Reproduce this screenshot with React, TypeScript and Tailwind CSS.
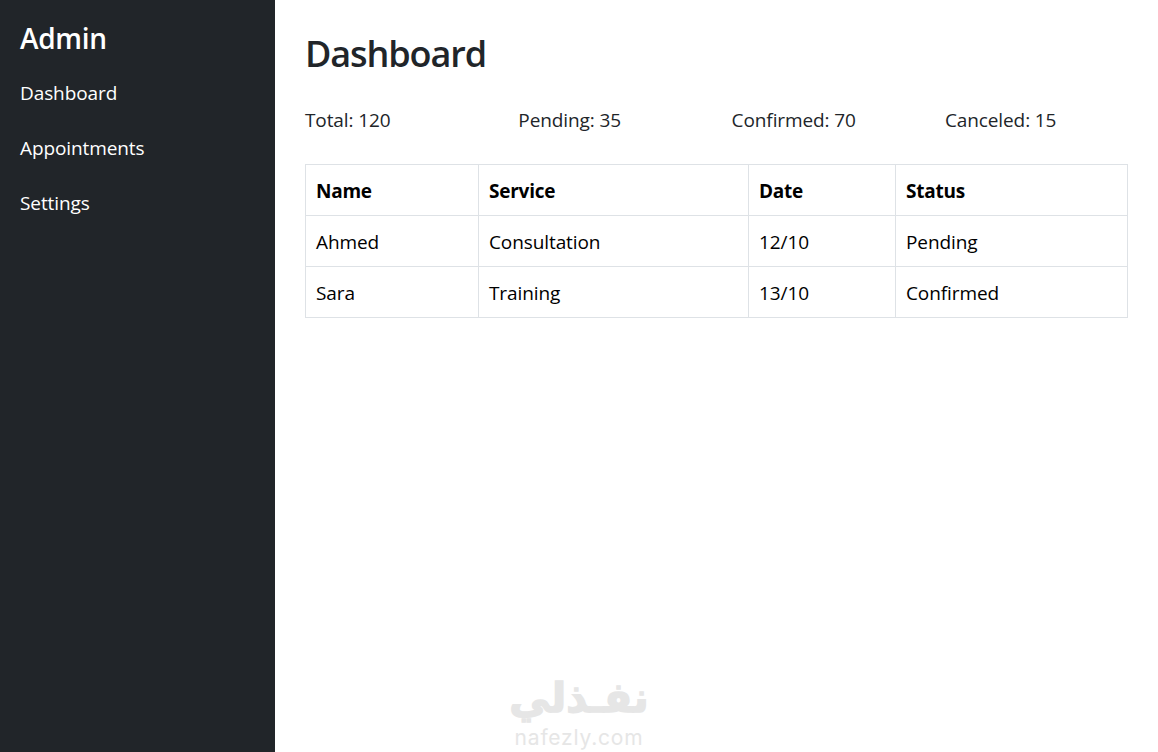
const stats = ["Total: 120", "Pending: 35", "Confirmed: 70", "Canceled: 15"];

const rows = [
  ["Ahmed", "Consultation", "12/10", "Pending"],
  ["Sara", "Training", "13/10", "Confirmed"],
];

const cell = "border border-[#dee2e6] px-[10px] pt-[3px] h-[51px] text-left";

export default function App() {
  return (
    <div className="relative flex h-[752px] w-[1158px] overflow-hidden bg-white font-['Open_Sans','Noto_Sans',sans-serif] text-[#212529]">
      {/* Sidebar */}
      <aside className="w-[275px] shrink-0 bg-[#212529] px-5 pt-[19px] text-white">
        <h2 className="mb-[23px] text-[28px] leading-[38px] font-semibold tracking-[-0.3px]">Admin</h2>
        <nav className="flex flex-col gap-[28px] text-[19px] leading-[27px] tracking-[-0.1px]">
          <a>Dashboard</a>
          <a>Appointments</a>
          <a>Settings</a>
        </nav>
      </aside>

      {/* Main */}
      <main className="flex-1 px-[30px] pt-[30px]">
        <h1 className="mb-[29px] text-[36px] leading-[48px] font-semibold tracking-[-1.1px]">Dashboard</h1>
        <div className="mb-[31px] flex text-[19px] leading-[26px] tracking-[-0.1px]">
          {stats.map((s) => (
            <div key={s} className="w-[213.3px]">{s}</div>
          ))}
        </div>
        <table className="w-[822px] table-fixed border-collapse text-[19px] tracking-[-0.1px] text-black">
          <colgroup>
            <col className="w-[173px]" />
            <col className="w-[270px]" />
            <col className="w-[147px]" />
            <col className="w-[232px]" />
          </colgroup>
          <thead>
            <tr>
              <th className={`${cell} tracking-[-0.25px]`}>Name</th>
              <th className={`${cell} tracking-[-0.25px]`}>Service</th>
              <th className={`${cell} tracking-[-0.25px]`}>Date</th>
              <th className={`${cell} tracking-[-0.25px]`}>Status</th>
            </tr>
          </thead>
          <tbody>
            {rows.map((r) => (
              <tr key={r[0]}>
                {r.map((c) => (
                  <td key={c} className={cell}>{c}</td>
                ))}
              </tr>
            ))}
          </tbody>
        </table>
      </main>

      {/* Watermark */}
      <div className="absolute top-[670px] left-[508px] flex w-[142px] flex-col items-center text-[#e6e6e6]">
        <span dir="rtl" className="font-['DejaVu_Sans',sans-serif] text-[41px] leading-[56px] font-bold [-webkit-text-stroke:1.5px_#e6e6e6]">نفـذلي</span>
        <span className="font-['Inter',sans-serif] text-[21px] leading-[24px] tracking-[0.8px]">nafezly.com</span>
      </div>
    </div>
  );
}
